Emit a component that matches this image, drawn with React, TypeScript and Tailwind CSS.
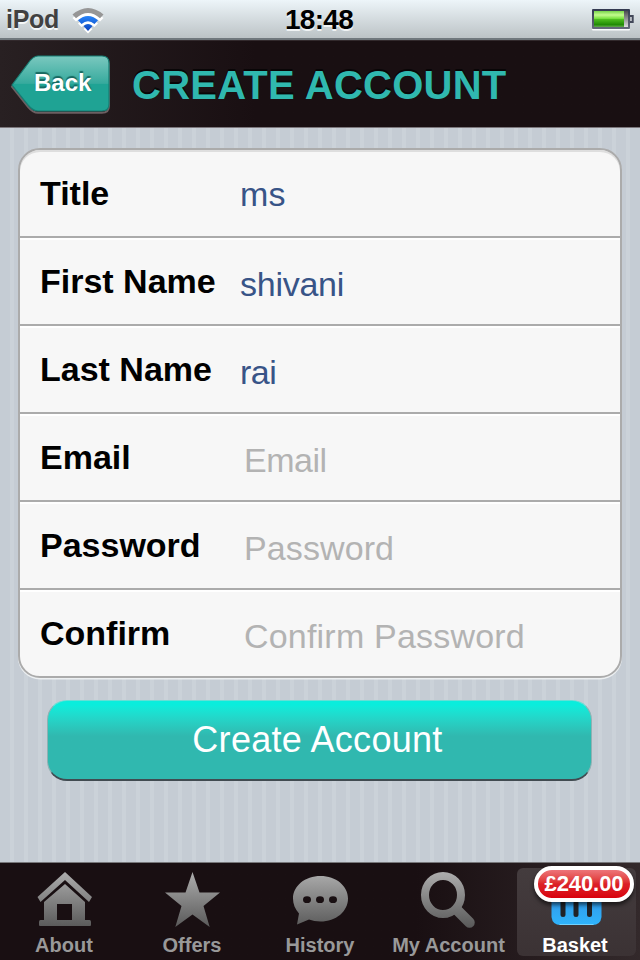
import type { ReactNode } from "react";

const fields = [
  { label: "Title", value: "ms", filled: true, pad: "pt-[4px]", track: "tracking-[0.3px]" },
  { label: "First Name", value: "shivani", filled: true, pad: "pt-[6px]", track: "tracking-[-0.25px]" },
  { label: "Last Name", value: "rai", filled: true, pad: "pt-[6px]", track: "tracking-[-0.5px]" },
  { label: "Email", value: "Email", filled: false, pad: "pt-[6px]", track: "tracking-[-0.5px]" },
  { label: "Password", value: "Password", filled: false, pad: "pt-[6px]", track: "tracking-[0.1px]" },
  { label: "Confirm", value: "Confirm Password", filled: false, pad: "pt-[6px]", track: "tracking-[0.2px]" },
];

function StatusBar() {
  return (
    <div className="flex h-10 items-start justify-between border-b-2 border-[#70787d] bg-[#dfe5e8] bg-gradient-to-b from-[#edf5f9] to-[#bcc3c6]">
      <div className="flex w-[200px] items-start pl-[6px]">
        <span className="mt-[3px] text-[25px] leading-[32px] font-bold tracking-[-0.3px] text-[#414141] [text-shadow:0_2px_0_#f5f8f9]">
          iPod
        </span>
        <svg className="mt-[6px] ml-[12px]" width="34" height="30" viewBox="71 6 34 30">
          <defs>
            <linearGradient id="wifi" x1="0" y1="14" x2="0" y2="32" gradientUnits="userSpaceOnUse">
              <stop stopColor="#2a8cff" />
              <stop offset="1" stopColor="#0a3fbb" />
            </linearGradient>
          </defs>
          <path d="M72.500 16.500Q88 3 103.500 16.500L100 20Q88 9.500 76 20ZM78 22Q88 13 98 22L94.500 25.500Q88 20 81.500 25.500ZM83.500 27.500Q88 23.500 92.500 27.500L88 32Z" fill="#fff" transform="translate(0 1.600)" />
          <path d="M72.500 14.500Q88 1.500 103.500 14.500L100 18.300Q88 7.500 76 18.300Z" fill="#969696" />
          <path d="M78 20.300Q88 11.500 98 20.300L94.500 24Q88 18.300 81.500 24ZM83.500 26Q88 22 92.500 26L88 31Z" fill="url(#wifi)" />
        </svg>
      </div>
      <span className="mt-[4px] -ml-[2px] text-[28px] leading-[32px] font-bold tracking-[-0.7px] text-black [text-shadow:0_2px_0_#f0f3f4]">
        18:48
      </span>
      <div className="flex w-[200px] justify-end pt-[8px] pr-[5px]">
        <svg width="44" height="24" viewBox="591 8 44 24">
          <defs>
            <linearGradient id="charge" x1="0" y1="0" x2="0" y2="1">
              <stop stopColor="#77d44a" />
              <stop offset=".25" stopColor="#c3fb8e" />
              <stop offset=".48" stopColor="#75df3c" />
              <stop offset=".52" stopColor="#4ebd1f" />
              <stop offset=".85" stopColor="#218b05" />
              <stop offset="1" stopColor="#62a84d" />
            </linearGradient>
            <linearGradient id="empty" x1="0" y1="0" x2="0" y2="1">
              <stop stopColor="#4c4c50" />
              <stop offset="1" stopColor="#dededf" />
            </linearGradient>
            <linearGradient id="case" x1="0" y1="0" x2="0" y2="1">
              <stop stopColor="#333950" />
              <stop offset="1" stopColor="#656a7a" />
            </linearGradient>
          </defs>
          <rect x="592" y="28" width="38" height="2.500" rx="1" fill="#fafcfd" />
          <rect x="592" y="9" width="38" height="20" rx="1" fill="url(#case)" />
          <rect x="594" y="11" width="30" height="16" fill="url(#charge)" />
          <rect x="624" y="11" width="4" height="16" fill="url(#empty)" />
          <path d="M630 16H632.800V22H630" fill="#b8bcc2" stroke="#424859" strokeWidth="1.800" />
        </svg>
      </div>
    </div>
  );
}

function Header() {
  return (
    <header className="flex h-[88px] items-start border-b border-[#7c777c] bg-[#190f12] bg-gradient-to-r from-[#282022] via-[#190f12] via-40% to-[#190f12] shadow-[inset_0_1px_0_#32292c]">
      <button className="relative mt-[14px] ml-[10px] flex h-[62px] w-[102px] items-start">
        <svg className="absolute inset-0" width="102" height="62" viewBox="10 54 102 62">
          <defs>
            <linearGradient id="back" x1="0" y1="56" x2="0" y2="112" gradientUnits="userSpaceOnUse">
              <stop stopColor="#7bc8bf" />
              <stop offset=".49" stopColor="#36aa9d" />
              <stop offset=".5" stopColor="#1fa394" />
              <stop offset="1" stopColor="#1fa394" />
            </linearGradient>
          </defs>
          <path d="M12 86L28 64.500Q33 57 38 57H102Q109 57 109 64V105Q109 112 102 112H38Q33 112 28 106Z" fill="none" stroke="#6c5f62" strokeWidth="2" transform="translate(0 .8)" />
          <path d="M12 85L28 63.500Q33 56 38 56H102Q109 56 109 63V104Q109 111 102 111H38Q33 111 28 105Z" fill="url(#back)" stroke="#177e74" strokeWidth="1.200" />
        </svg>
        <span className="relative mt-[14px] ml-[24px] text-[24px] leading-[30px] font-bold text-white [text-shadow:0_-2px_1px_#17675f]">
          Back
        </span>
      </button>
      <h1 className="mt-[22px] ml-[20px] text-[40px] leading-[46px] font-bold tracking-[0.24px] whitespace-nowrap text-[#30b8af] [text-shadow:0_-2px_0_#090607]">
        CREATE ACCOUNT
      </h1>
    </header>
  );
}

function TabLabel({ children, active }: { children: ReactNode; active?: boolean }) {
  return (
    <span className={`block text-[20px] leading-[24px] font-bold whitespace-nowrap ${active ? "text-white" : "text-[#999]"}`}>
      {children}
    </span>
  );
}

function TabBar() {
  return (
    <nav className="mt-auto grid h-[98px] grid-cols-5 border-t border-[#77777a] bg-[#190f12] bg-gradient-to-r from-[#190f12] from-65% to-[#33292b]">
      <a className="flex flex-col items-center pt-[3px]">
        <svg width="64" height="67" viewBox="32 866 64 67">
          <defs>
            <linearGradient id="gray" x1="0" y1="872" x2="0" y2="927" gradientUnits="userSpaceOnUse">
              <stop stopColor="#adadad" />
              <stop offset="1" stopColor="#5a5a5a" />
            </linearGradient>
          </defs>
          <path d="M65 872L92 897L89 902L65 880L40.500 902L37.500 897Z" fill="url(#gray)" />
          <path d="M65 884L85 902V920H89.500Q91 920 91 922V925Q91 926 90 926H40Q39 926 39 925V922Q39 920 40.500 920H44V902ZM57 904V920H72V904Z" fill="url(#gray)" fillRule="evenodd" />
        </svg>
        <TabLabel>About</TabLabel>
      </a>
      <a className="flex flex-col items-center pt-[3px]">
        <svg width="64" height="67" viewBox="160 866 64 67">
          <path d="M192.500 872L199.500 892.500H220L203.500 906L209.700 927L192.500 914.500L175.300 927L181.500 906L165 892.500H185.500Z" fill="url(#gray)" />
        </svg>
        <TabLabel>Offers</TabLabel>
      </a>
      <a className="flex flex-col items-center pt-[3px]">
        <svg width="64" height="67" viewBox="288 866 64 67">
          <path d="M320.500 876C336 876 348 886 348 898.500C348 911.500 336 921.500 320.500 921.500Q314 921.500 309 919.500L297 924.500L299 913.500C295 909 293 904 293 898.500C293 886 305 876 320.500 876Z" fill="url(#gray)" />
          <g fill="#190f12">
            <ellipse cx="307" cy="899.700" rx="4" ry="3.400" />
            <ellipse cx="320" cy="899.700" rx="4" ry="3.400" />
            <ellipse cx="333" cy="899.700" rx="4" ry="3.400" />
          </g>
        </svg>
        <TabLabel>History</TabLabel>
      </a>
      <a className="flex flex-col items-center pt-[3px]">
        <svg width="64" height="67" viewBox="416 866 64 67">
          <path d="M457 910L469.500 922.500" stroke="url(#gray)" strokeWidth="10.500" strokeLinecap="round" />
          <ellipse cx="443" cy="895" rx="18" ry="19" fill="none" stroke="url(#gray)" strokeWidth="8" />
        </svg>
        <span className="translate-x-[0.5px]">
          <TabLabel>My Account</TabLabel>
        </span>
      </a>
      <a className="relative flex flex-col items-center pt-[5px]">
        <div className="flex h-[88px] w-[119px] flex-col items-center rounded-[6px] bg-[#463d3f] bg-gradient-to-b from-[#443c3e] to-[#3b3234] pt-[29px]">
          <svg className="shrink-0" width="52" height="30" viewBox="550.5 897 52 30">
            <defs>
              <linearGradient id="basket" x1="0" y1="0" x2="0" y2="1">
                <stop stopColor="#3298e8" />
                <stop offset="1" stopColor="#2fb4fc" />
              </linearGradient>
            </defs>
            <path d="M552 897H602V917Q601 925 593 925H561Q553 925 552 917Z" fill="url(#basket)" />
            <path d="M563.500 903V914.500M576.500 903V914.500M590 903V914.500" stroke="#202329" strokeWidth="5" strokeLinecap="round" />
            <path d="M560 924.500H594" stroke="#71d2ff" />
          </svg>
          <span className="mt-[6px] mr-[2px] shrink-0">
            <TabLabel active>Basket</TabLabel>
          </span>
        </div>
        <span className="absolute top-[3px] right-[6px] flex h-[36px] w-[100px] items-center justify-center rounded-full border-4 border-white bg-gradient-to-b from-[#ed7479] via-[#dc2027] via-50% to-[#d9000c] text-[22px] leading-[22px] font-bold tracking-[-0.1px] text-white shadow-[0_3px_4px_#0009]">
          £240.00
        </span>
      </a>
    </nav>
  );
}

export default function App() {
  return (
    <main className="flex h-[960px] w-[640px] flex-col overflow-hidden bg-[#c5ccd4] bg-[repeating-linear-gradient(90deg,#c5ccd4_0px,#c5ccd4_10px,#cbd2d9_10px,#cbd2d9_14px)] font-['Liberation_Sans',Arial,sans-serif]">
      <StatusBar />
      <Header />
      <section className="mx-[18px] mt-[20px] h-[530px] overflow-hidden rounded-[22px] border-2 border-[#ababab] bg-[#f7f7f7] shadow-[0_1.5px_0_#edf0f2,inset_0_2px_0_#dedede]">
        {fields.map((field, index) => (
          <div
            key={field.label}
            className={`flex items-start pl-5 ${index === 0 ? "h-[86px]" : "h-[88px] border-t-2 border-[#ababab] shadow-[inset_0_2px_0_#fff]"}`}
          >
            <label className="w-[200px] pt-[23px] text-[34px] leading-[40px] font-bold whitespace-nowrap text-black">
              {field.label}
            </label>
            <div className={field.pad}>
              <span className={`block pt-[20px] text-[34px] leading-[40px] whitespace-nowrap ${field.track} ${field.filled ? "text-[#385487]" : "pl-[4px] text-[#b3b3b3]"}`}>
                {field.value}
              </span>
            </div>
          </div>
        ))}
      </section>
      <button className="mt-[22px] ml-[47px] h-[81px] w-[545px] shrink-0 rounded-[20px] border border-x-[#8fb1b3] border-t-[#65dfd5] border-b-2 border-b-[#414b51] bg-gradient-to-b from-[#0aeddc] from-5% to-[#30b8af] to-45% pr-[4px] text-[36px] leading-[40px] tracking-[0.3px] text-white">
        Create Account
      </button>
      <TabBar />
    </main>
  );
}
